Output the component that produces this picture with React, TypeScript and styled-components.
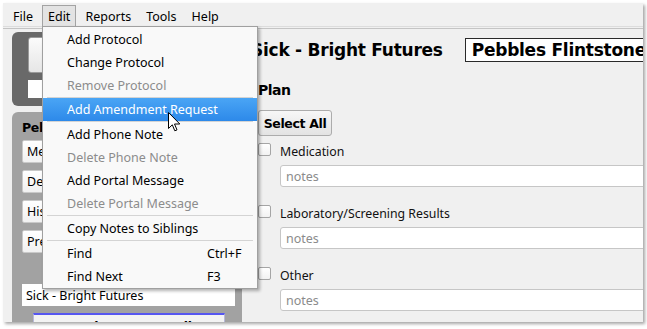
import React from 'react';
import styled, { createGlobalStyle } from 'styled-components';

const GlobalStyle = createGlobalStyle`
  html, body { margin: 0; padding: 0; background: #ffffff; }
  body { font-family: "Noto Sans", "DejaVu Sans", sans-serif; color: #000; }
  * { box-sizing: border-box; }
`;

const Page = styled.div`
  width: 647px;
  height: 329px;
  padding: 3px 0 0 3px;
  overflow: hidden;
`;

const Window = styled.div`
  position: relative;
  width: 640px;
  height: 319px;
  background: #f0f0f0;
  box-shadow: 2px 2px 3px rgba(0, 0, 0, 0.35);
  overflow: hidden;
  display: flex;
  flex-direction: column;
`;

const MenuBar = styled.div`
  height: 24px;
  flex-shrink: 0;
  padding: 2px 0 0 4px;
  display: flex;
  gap: 3px;
  border-bottom: 1px solid #dcdcdc;
  font-size: 12.5px;
`;

const MenuBarItem = styled.div<{ $active?: boolean }>`
  height: 21px;
  padding: 0 5px;
  display: flex;
  align-items: center;
  border: 1px solid ${p => (p.$active ? '#a3a3a3' : 'transparent')};
  border-bottom: none;
  background: ${p => (p.$active ? '#e3e3e3' : 'transparent')};
`;

const Body = styled.div`
  flex: 1;
  display: flex;
  margin-top: 1px;
  border-top: 1px solid #c4c4c4;
  min-height: 0;
`;

const LeftColumn = styled.div`
  width: 230px;
  flex-shrink: 0;
  margin: 3px 0 0 9px;
  display: flex;
  flex-direction: column;
  gap: 6px;
  min-height: 0;
`;

const DarkPanel = styled.div`
  height: 74px;
  flex-shrink: 0;
  background: #696969;
  border-radius: 6px;
  padding: 5px 14px 0 16px;
  display: flex;
  flex-direction: column;
  gap: 7px;
`;

const BigButton = styled.div`
  height: 36px;
  flex-shrink: 0;
  border: 1px solid #9a9a9a;
  border-radius: 3px;
  background: linear-gradient(#fbfbfb, #e6e6e6);
`;

const WhiteBox = styled.div`
  height: 18px;
  flex-shrink: 0;
  background: #ffffff;
`;

const LowerPanel = styled.div`
  flex: 1;
  min-height: 0;
  overflow: hidden;
  background: #a2a2a2;
  border-radius: 6px 6px 0 0;
  padding: 7px 7px 0 10px;
  display: flex;
  flex-direction: column;
`;

const PanelTitle = styled.div`
  flex-shrink: 0;
  font-family: "DejaVu Sans", sans-serif;
  font-weight: bold;
  font-size: 12.5px;
  letter-spacing: -0.3px;
  height: 17px;
  line-height: 17px;
  margin-bottom: 4px;
  white-space: nowrap;
`;

const NavList = styled.div`
  flex-shrink: 0;
  display: flex;
  flex-direction: column;
  gap: 7px;
`;

const NavButton = styled.div`
  width: 110px;
  height: 23px;
  flex-shrink: 0;
  padding-left: 4px;
  display: flex;
  align-items: center;
  font-size: 12.5px;
  background: linear-gradient(#ffffff, #f1f1f1);
  border: 1px solid #c9c9c9;
  border-radius: 2px;
`;

const VisitField = styled.div`
  flex-shrink: 0;
  margin-top: 31px;
  width: 213px;
  height: 22px;
  background: #ffffff;
  padding-left: 4px;
  display: flex;
  align-items: center;
  font-size: 12.5px;
`;

const DetailsButton = styled.div`
  flex-shrink: 0;
  margin: 7px 0 0 11px;
  width: 192px;
  height: 24px;
  border-top: 2px solid #5656f0;
  border-left: 1px solid #b8b8d8;
  border-right: 1px solid #b8b8d8;
  background: #f3f3f3;
  font-family: "DejaVu Sans", sans-serif;
  font-weight: bold;
  font-size: 12.5px;
  letter-spacing: -0.3px;
  text-align: center;
  padding-top: 4px;
  white-space: nowrap;
`;

const Main = styled.div`
  flex: 1;
  padding: 9px 0 0 9px;
  display: flex;
  flex-direction: column;
  min-width: 0;
`;

const TitleRow = styled.div`
  display: flex;
  align-items: center;
  gap: 22px;
  white-space: nowrap;
`;

const Title = styled.div`
  font-family: "DejaVu Sans", sans-serif;
  font-weight: bold;
  font-size: 17px;
  letter-spacing: -0.25px;
`;

const NameBox = styled.div`
  height: 24px;
  padding: 0 6px;
  display: flex;
  align-items: center;
  border: 1px solid #2a2a2a;
  background: #ffffff;
  font-family: "DejaVu Sans", sans-serif;
  font-weight: bold;
  font-size: 17px;
  letter-spacing: -0.25px;
`;

const Section = styled.div`
  padding-left: 7px;
  display: flex;
  flex-direction: column;
`;

const SectionTitle = styled.div`
  margin-top: 19px;
  height: 18px;
  line-height: 18px;
  font-family: "DejaVu Sans", sans-serif;
  font-weight: bold;
  font-size: 14px;
  letter-spacing: -0.5px;
`;

const SelectAllButton = styled.button`
  margin-top: 11px;
  align-self: flex-start;
  width: 74px;
  height: 26px;
  padding: 0;
  border: 1px solid #acacac;
  border-radius: 3px;
  background: linear-gradient(#f7f7f7, #e3e3e3);
  font-family: "DejaVu Sans", sans-serif;
  font-weight: bold;
  font-size: 12.5px;
  letter-spacing: -0.35px;
  color: #000;
`;

const Groups = styled.div`
  margin-top: 7px;
  display: flex;
  flex-direction: column;
  gap: 18px;
`;

const Group = styled.div`
  display: flex;
  flex-direction: column;
  gap: 6px;
`;

const GroupHeader = styled.div`
  height: 16px;
  display: flex;
  align-items: center;
  gap: 9px;
  font-size: 12.3px;
  color: #111;
`;

const CheckBox = styled.span`
  width: 13px;
  height: 13px;
  margin-top: -3px;
  border: 1px solid #a5a5a5;
  border-radius: 2px;
  background: linear-gradient(#ffffff, #f2f2f2);
`;

const NotesInput = styled.input`
  margin-left: 22px;
  width: 420px;
  height: 22px;
  padding: 0 0 0 5px;
  border: 1px solid #c6c6c6;
  border-radius: 3px;
  background: #ffffff;
  font-family: "Noto Sans", sans-serif;
  font-size: 12.5px;
  outline: none;
  &::placeholder { color: #8b8b8b; }
`;

const Dropdown = styled.div`
  position: absolute;
  left: 39px;
  top: 23px;
  width: 216px;
  background: #f9f9f9;
  border: 1px solid #a0a0a0;
  box-shadow: 2px 2px 3px rgba(0, 0, 0, 0.3);
  font-size: 12.5px;
  padding: 1px 0 0;
`;

const DropItem = styled.div<{ $disabled?: boolean; $hot?: boolean }>`
  height: 23px;
  padding-left: 24px;
  display: grid;
  grid-template-columns: 140px 1fr;
  align-items: center;
  white-space: nowrap;
  color: ${p => (p.$hot ? '#ffffff' : p.$disabled ? '#8c8c8c' : '#000000')};
  background: ${p => (p.$hot ? 'linear-gradient(#4aa5f5, #2d89e9)' : 'transparent')};
`;

const DropSep = styled.div<{ $gap?: number }>`
  height: 1px;
  margin: 0 4px ${p => p.$gap ?? 1}px 4px;
  background: #d4d4d4;
`;

const CursorWrap = styled.div`
  position: absolute;
  left: 165px;
  top: 109px;
  width: 13px;
  height: 21px;
  pointer-events: none;
`;

const Cursor = () => (
  <CursorWrap>
    <svg width="13" height="21" viewBox="0 0 13 21">
      <path
        d="M0.5 0.5 L0.5 16.5 L4.3 12.8 L6.8 18.8 L9 17.9 L6.5 12 L11.8 12 Z"
        fill="#ffffff"
        stroke="#000000"
        strokeWidth="1"
        strokeLinejoin="miter"
      />
    </svg>
  </CursorWrap>
);

export default function App() {
  return (
    <>
      <GlobalStyle />
      <Page>
        <Window>
          <MenuBar>
            <MenuBarItem>File</MenuBarItem>
            <MenuBarItem $active>Edit</MenuBarItem>
            <MenuBarItem>Reports</MenuBarItem>
            <MenuBarItem>Tools</MenuBarItem>
            <MenuBarItem>Help</MenuBarItem>
          </MenuBar>
          <Body>
            <LeftColumn>
              <DarkPanel>
                <BigButton />
                <WhiteBox />
              </DarkPanel>
              <LowerPanel>
                <PanelTitle>Pebbles Flintstone</PanelTitle>
                <NavList>
                  <NavButton>Medications</NavButton>
                  <NavButton>Demographics</NavButton>
                  <NavButton>History</NavButton>
                  <NavButton>Preventive</NavButton>
                </NavList>
                <VisitField>Sick - Bright Futures</VisitField>
                <DetailsButton>Appointment Details</DetailsButton>
              </LowerPanel>
            </LeftColumn>
            <Main>
              <TitleRow>
                <Title>Sick - Bright Futures</Title>
                <NameBox>Pebbles Flintstone</NameBox>
              </TitleRow>
              <Section>
                <SectionTitle>Plan</SectionTitle>
                <SelectAllButton>Select All</SelectAllButton>
                <Groups>
                  <Group>
                    <GroupHeader><CheckBox />Medication</GroupHeader>
                    <NotesInput placeholder="notes" readOnly />
                  </Group>
                  <Group>
                    <GroupHeader><CheckBox />Laboratory/Screening Results</GroupHeader>
                    <NotesInput placeholder="notes" readOnly />
                  </Group>
                  <Group>
                    <GroupHeader><CheckBox />Other</GroupHeader>
                    <NotesInput placeholder="notes" readOnly />
                  </Group>
                </Groups>
              </Section>
            </Main>
          </Body>
          <Dropdown>
            <DropItem>Add Protocol</DropItem>
            <DropItem>Change Protocol</DropItem>
            <DropItem $disabled>Remove Protocol</DropItem>
            <DropSep $gap={0} />
            <DropItem $hot>Add Amendment Request</DropItem>
            <DropSep $gap={1} />
            <DropItem>Add Phone Note</DropItem>
            <DropItem $disabled>Delete Phone Note</DropItem>
            <DropItem>Add Portal Message</DropItem>
            <DropItem $disabled>Delete Portal Message</DropItem>
            <DropSep />
            <DropItem>Copy Notes to Siblings</DropItem>
            <DropSep />
            <DropItem><span>Find</span><span>Ctrl+F</span></DropItem>
            <DropItem><span>Find Next</span><span>F3</span></DropItem>
          </Dropdown>
          <Cursor />
        </Window>
      </Page>
    </>
  );
}
